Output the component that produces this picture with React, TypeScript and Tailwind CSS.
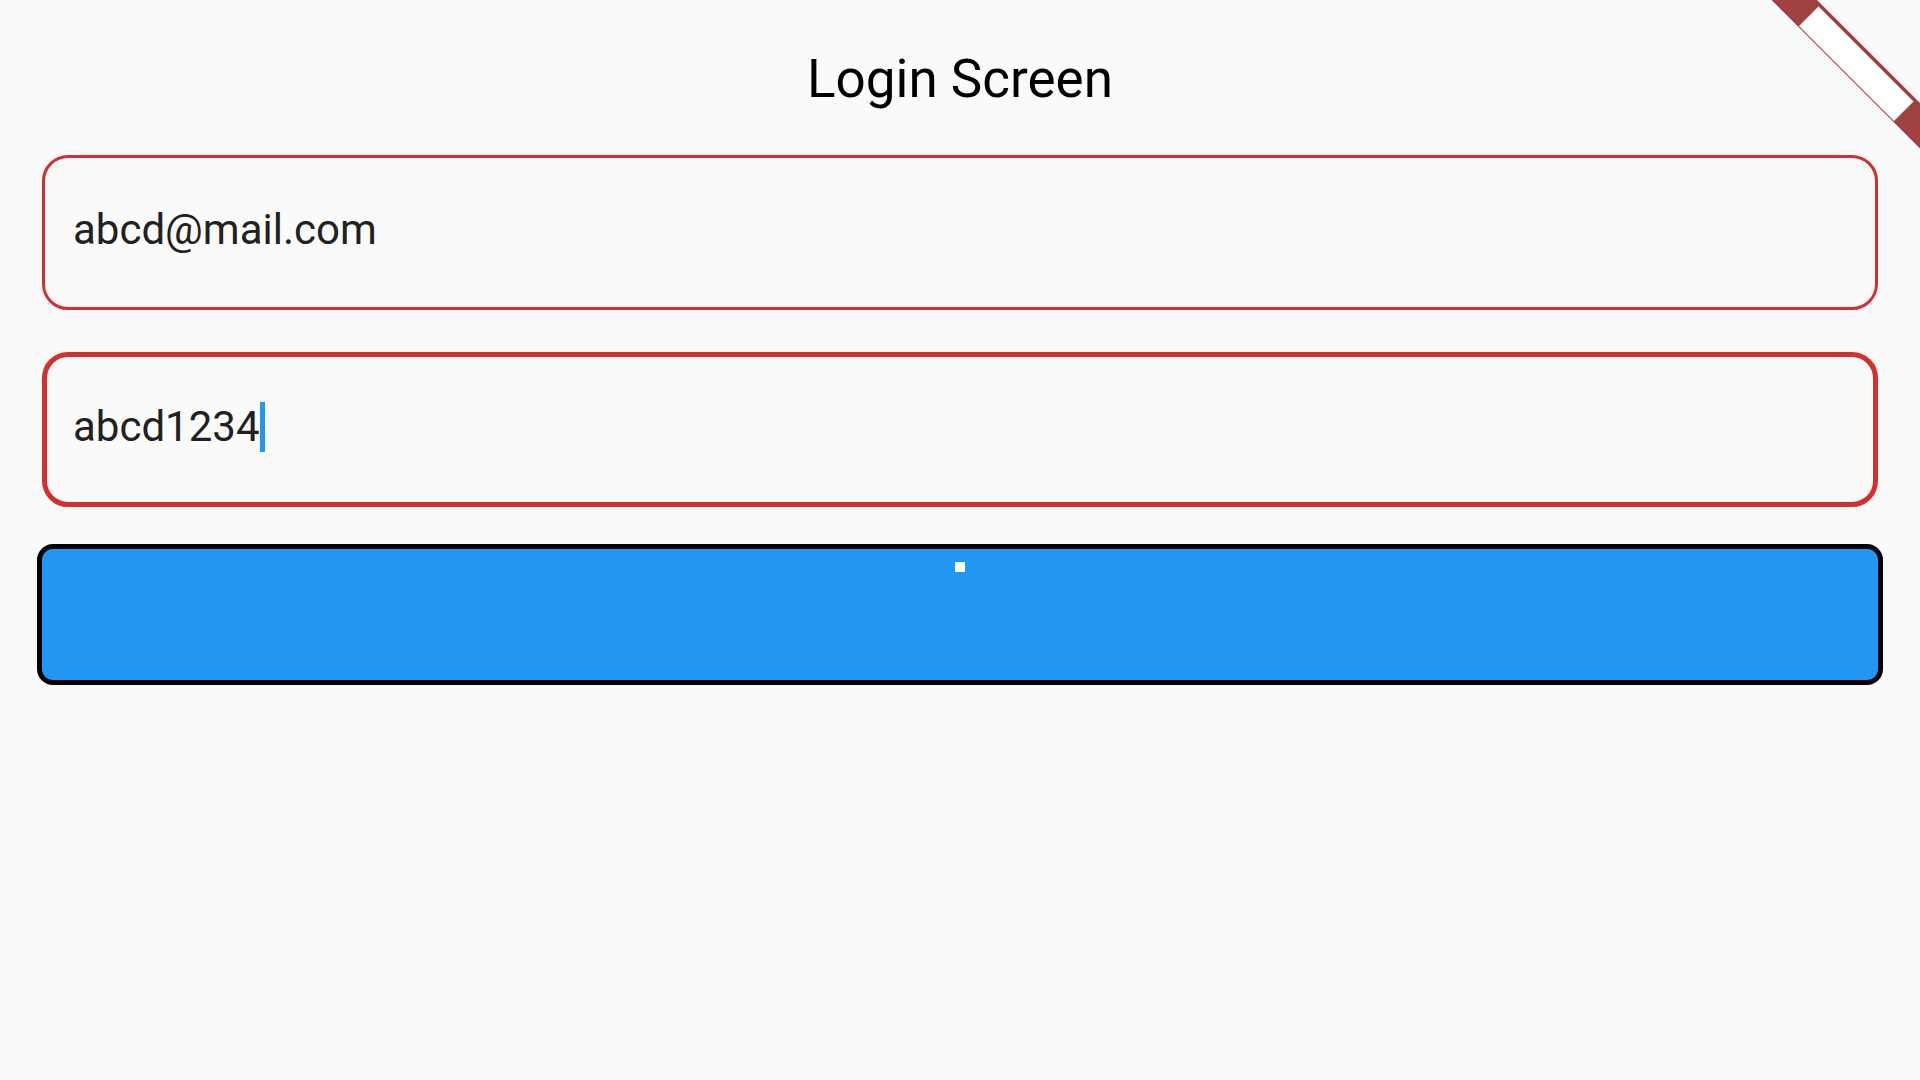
function CornerRibbon() {
  return (
    <svg
      className="pointer-events-none absolute top-0 right-0"
      width="160"
      height="160"
      viewBox="0 0 160 160"
      aria-hidden="true"
    >
      <path d="M11.5 0H57L160 103V148.5Z" fill="#a04040" />
      <path d="M39 26L58.5 6.5L153.5 101.5L134 121Z" fill="#ffffff" />
    </svg>
  );
}

export default function App() {
  return (
    <main className="relative min-h-screen overflow-hidden bg-[#fafafa] font-['Roboto',sans-serif]">
      <CornerRibbon />
      <h1 className="pt-12 text-center text-[53px] leading-[63px] font-normal text-black">
        Login Screen
      </h1>
      <form className="mt-11 px-[42px]" onSubmit={(e) => e.preventDefault()}>
        <input
          type="email"
          aria-label="Email"
          defaultValue="abcd@mail.com"
          className="block h-[155px] w-full rounded-[26px] border-3 border-[#d32f2f] bg-transparent px-7 pb-[7px] text-[42px] text-[#212121] outline-none"
        />
        <div className="relative mt-[42px]">
          <input
            type="text"
            aria-label="Password"
            defaultValue="abcd1234"
            className="block h-[155px] w-full rounded-[26px] border-5 border-[#d32f2f] bg-transparent px-[26px] pb-[7px] text-[42px] text-[#212121] caret-[#2196f3] outline-none"
          />
          <div
            className="pointer-events-none absolute inset-0 flex items-center px-[31px] pb-[5px] text-[42px]"
            aria-hidden="true"
          >
            <span className="h-[50px] border-r-5 border-[#2196f3] leading-[50px] text-transparent">
              abcd1234
            </span>
          </div>
        </div>
        <button
          type="submit"
          aria-label="Log in"
          className="-mx-[5px] mt-[37px] flex h-[141px] w-[calc(100%+10px)] items-start justify-center rounded-2xl border-5 border-black bg-[#2196f3] pt-[13px]"
        >
          <span className="size-[10px] bg-white" />
        </button>
      </form>
    </main>
  );
}
